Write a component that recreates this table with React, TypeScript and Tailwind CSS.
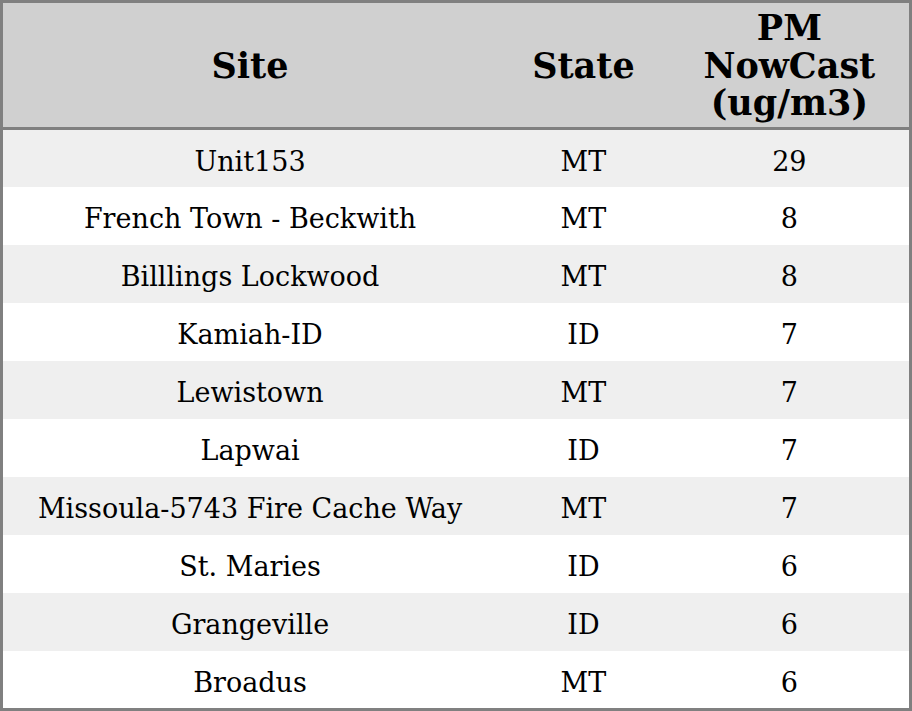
import React from 'react';

// PM NowCast readings by site
const rows: { site: string; state: string; pm: number }[] = [
  { site: 'Unit153', state: 'MT', pm: 29 },
  { site: 'French Town - Beckwith', state: 'MT', pm: 8 },
  { site: 'Billlings Lockwood', state: 'MT', pm: 8 },
  { site: 'Kamiah-ID', state: 'ID', pm: 7 },
  { site: 'Lewistown', state: 'MT', pm: 7 },
  { site: 'Lapwai', state: 'ID', pm: 7 },
  { site: 'Missoula-5743 Fire Cache Way', state: 'MT', pm: 7 },
  { site: 'St. Maries', state: 'ID', pm: 6 },
  { site: 'Grangeville', state: 'ID', pm: 6 },
  { site: 'Broadus', state: 'MT', pm: 6 },
];

function App() {
  return (
    <div className="w-[912px] h-[711px] bg-white font-['DejaVu_Serif',serif] text-black">
      <table className="w-[912px] border-collapse border-[3px] border-[#808080] table-fixed">
        <colgroup>
          <col className="w-[494px]" />
          <col className="w-[172px]" />
          <col className="w-[240px]" />
        </colgroup>
        <thead>
          <tr className="h-[127px] bg-[#d0d0d0] border-b-[3px] border-[#808080]">
            <th className="text-[35px] font-bold leading-[37.5px] text-center p-0 pt-[1px]">Site</th>
            <th className="text-[35px] font-bold leading-[37.5px] text-center p-0 pt-[1px]">State</th>
            <th className="text-[35px] font-bold leading-[37.5px] text-center p-0 pt-[1px]">
              PM
              <br />
              NowCast
              <br />
              (ug/m3)
            </th>
          </tr>
        </thead>
        <tbody>
          {rows.map((r, i) => {
            const h = i === 0 ? 'h-[58.5px]' : i === rows.length - 1 ? 'h-[58.5px]' : 'h-[58px]';
            const bg = i % 2 === 0 ? 'bg-[#efefef]' : 'bg-white';
            return (
              <tr key={r.site} className={`${h} ${bg}`}>
                <td className="text-[27px] leading-[32px] text-center p-0 pt-[6px]">{r.site}</td>
                <td className="text-[27px] leading-[32px] text-center p-0 pt-[6px]">{r.state}</td>
                <td className="text-[27px] leading-[32px] text-center p-0 pt-[6px]">{r.pm}</td>
              </tr>
            );
          })}
        </tbody>
      </table>
    </div>
  );
}

export default App;
